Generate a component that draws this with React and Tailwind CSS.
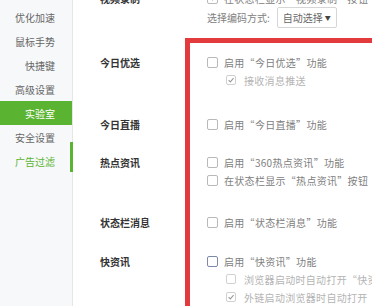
const font = { fontFamily: '"Noto Sans CJK SC", "Noto Sans", sans-serif' }

const navItems = ['优化加速', '鼠标手势', '快捷键', '高级设置', '实验室', '安全设置', '广告过滤']

const Box = ({ checked = false, sub = false, focus = false }) => (
  <span
    className={`relative flex items-center justify-center shrink-0 rounded-[2px] bg-white ${
      focus
        ? 'w-[11px] h-[11px] border-[1.5px] border-[#7d89aa]'
        : sub
          ? 'w-[10px] h-[10px] border border-[#d0d0d0]'
          : 'w-[11px] h-[11px] border border-[#b9b9b9]'
    }`}
  >
    {checked && (
      <svg viewBox="0 0 10 10" className="w-[8px] h-[8px]">
        <path d="M2 5.2 L4.2 7.3 L8.2 2.8" fill="none" stroke="#9a9a9a" strokeWidth="1.4" />
      </svg>
    )}
  </span>
)

const Opt = ({ text, checked, sub, focus }) => (
  <div className={`flex items-center h-[18px] ${sub ? 'pl-[19px] gap-[8px]' : 'gap-[6px]'}`}>
    <Box checked={checked} sub={sub} focus={focus} />
    <span className={`text-[10px] tracking-[0.3px] whitespace-nowrap ${sub ? 'text-[#b4b4b4]' : 'text-[#808080]'}`}>{text}</span>
  </div>
)

const Section = ({ label, className = '', children }) => (
  <div className={`flex ${className}`}>
    <div className="w-[134px] shrink-0 pl-[27px] h-[18px] flex items-center text-[10px] font-bold text-[#333]">{label}</div>
    <div className="flex flex-col">{children}</div>
  </div>
)

export default function App() {
  return (
    <div className="relative w-[372px] h-[306px] overflow-hidden bg-white flex" style={font}>
      <div className="w-[73px] shrink-0 bg-[#f7f8fa] border-r border-[#e4e6e8] pt-[5px] flex flex-col">
        {navItems.map((n) => (
          <div
            key={n}
            className={`relative h-[24px] flex items-center justify-end pr-[17px] text-[10px] ${
              n === '实验室' ? 'bg-[#5bb431] text-white' : n === '广告过滤' ? 'text-[#5bb431]' : 'text-[#666]'
            }`}
          >
            {n}
            {n === '广告过滤' && <span className="absolute right-[-1px] top-[-7px] w-[3px] h-[30px] bg-[#5bb431]" />}
          </div>
        ))}
      </div>

      <div className="flex flex-col">
        <Section label="视频录制" className="-mt-[11px]">
          <Opt text="在状态栏显示“视频录制”按钮" checked />
        </Section>
        <div className="flex items-center h-[22px] pl-[134px] gap-[7px]">
          <span className="text-[10px] text-[#808080] whitespace-nowrap">选择编码方式:</span>
          <div className="h-[21px] w-[60px] shrink-0 border border-[#d6d6d6] rounded-[2px] flex items-center justify-between px-[5px] bg-white">
            <span className="text-[10px] text-[#666] whitespace-nowrap">自动选择</span>
            <span className="text-[6px] text-[#444]">▼</span>
          </div>
        </div>

        <Section label="今日优选" className="mt-[25px]">
          <Opt text="启用“今日优选”功能" />
          <Opt text="接收消息推送" checked sub />
        </Section>
        <Section label="今日直播" className="mt-[26px]">
          <Opt text="启用“今日直播”功能" />
        </Section>
        <Section label="热点资讯" className="mt-[20px]">
          <Opt text="启用“360热点资讯”功能" />
          <Opt text="在状态栏显示“热点资讯”按钮" />
        </Section>
        <Section label="状态栏消息" className="mt-[24px]">
          <Opt text="启用“状态栏消息”功能" />
        </Section>
        <Section label="快资讯" className="mt-[21px]">
          <Opt text="启用“快资讯”功能" focus />
          <Opt text="浏览器启动时自动打开“快资讯”" sub />
          <Opt text="外链启动浏览器时自动打开“快资讯”" checked sub />
        </Section>
      </div>

      <div className="absolute left-[185px] top-[38px] w-[220px] h-[300px] border-[5px] border-[#e23a3d]" />
    </div>
  )
}
